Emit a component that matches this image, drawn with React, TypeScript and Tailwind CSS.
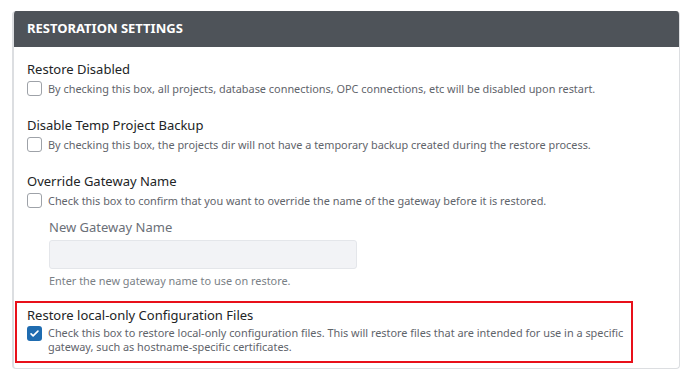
import React from 'react';

const font = { fontFamily: '"Noto Sans", "Open Sans", sans-serif' };

const Checkbox: React.FC<{ checked?: boolean }> = ({ checked }) =>
  checked ? (
    <span className="flex h-[15px] w-[15px] shrink-0 items-center justify-center rounded-[3px] bg-[#1f6cb0]">
      <svg viewBox="0 0 16 16" className="h-[11px] w-[11px]" fill="none">
        <path d="M3 8.5l3 3 7-7" stroke="#fff" strokeWidth="2.4" strokeLinecap="round" strokeLinejoin="round" />
      </svg>
    </span>
  ) : (
    <span className="block h-[15px] w-[15px] shrink-0 rounded-[3px] border border-[#9ea2a8] bg-white" />
  );

const Setting: React.FC<{ title: string; text: string }> = ({ title, text }) => (
  <div>
    <div className="text-[13px] leading-[20px] text-[#222426]">{title}</div>
    <div className="mt-[2px] flex items-start gap-[6px]">
      <Checkbox />
      <p className="text-[10.9px] leading-[15px] text-[#5f646b]">{text}</p>
    </div>
  </div>
);

export default function App() {
  return (
    <div className="min-h-[373px] bg-white pl-[12px] pr-[10px] pt-[11px]" style={font}>
      <section className="w-[668px] overflow-hidden rounded-[4px] border border-t-0 border-l-2 border-[#dcdee1]">
        <header className="flex h-[36px] items-center bg-[#4e5359] px-[13px]">
          <h2 className="text-[13px] font-bold text-white">RESTORATION SETTINGS</h2>
        </header>
        <div className="flex flex-col pb-[5px] pl-[13px] pt-[12px]">
          <Setting
            title="Restore Disabled"
            text="By checking this box, all projects, database connections, OPC connections, etc will be disabled upon restart."
          />
          <div className="mt-[19px]">
            <Setting
              title="Disable Temp Project Backup"
              text="By checking this box, the projects dir will not have a temporary backup created during the restore process."
            />
          </div>
          <div className="mt-[19px]">
            <Setting
              title="Override Gateway Name"
              text="Check this box to confirm that you want to override the name of the gateway before it is restored."
            />
          </div>
          <div className="ml-[22px] mt-[9px]">
            <div className="text-[13px] leading-[20px] text-[#6b7078]">New Gateway Name</div>
            <div className="mt-[3px] h-[29px] w-[308px] rounded-[3px] border border-[#e4e6ea] bg-[#f2f3f6]" />
            <div className="mt-[4px] text-[10.9px] leading-[16px] text-[#7a7f86]">Enter the new gateway name to use on restore.</div>
          </div>
          <div className="-ml-[12px] mt-[12px] w-[618px] border-2 border-[#e8101a] pb-[7px] pl-[10px] pr-[4px] pt-[2px]">
            <div className="text-[13px] leading-[20px] text-[#222426]">Restore local-only Configuration Files</div>
            <div className="mt-[1px] flex items-start gap-[6px]">
              <Checkbox checked />
              <p className="text-[10.9px] leading-[14px] text-[#5f646b]">
                Check this box to restore local-only configuration files. This will restore files that are intended for use in a specific gateway, such as hostname-specific certificates.
              </p>
            </div>
          </div>
        </div>
      </section>
    </div>
  );
}
